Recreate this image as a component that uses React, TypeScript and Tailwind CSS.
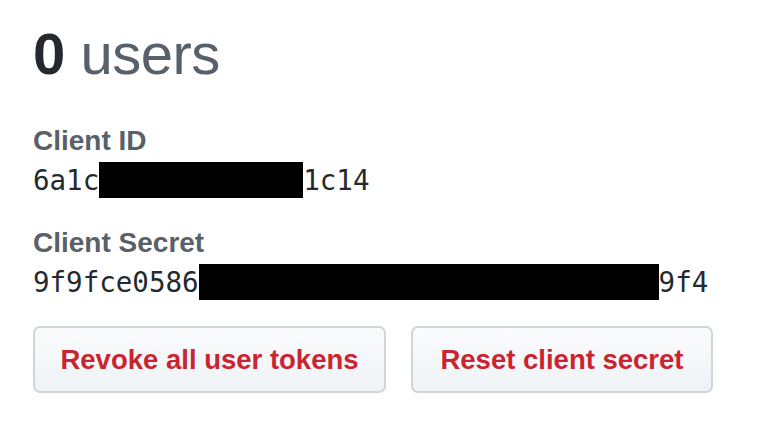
import React from 'react';

const sans = "font-['Liberation_Sans',Arial,sans-serif]";
const mono = "font-['DejaVu_Sans_Mono','Liberation_Mono',monospace]";

const Redacted: React.FC<{ width: string }> = ({ width }) => (
  <span className={`inline-block ${width} h-[36px] bg-black align-[-8px]`} />
);

export default function App() {
  return (
    <div className={`w-[758px] h-[422px] bg-white pl-[33px] pt-[18px] ${sans}`}>
      <h2 className="text-[58px] leading-[72px] tracking-[-0.5px]">
        <span className="font-bold text-[#24292e]">0</span>{' '}
        <span className="text-[#586069]">users</span>
      </h2>

      <div className="mt-[35px] flex flex-col">
        <div className="text-[28px] leading-[32px] font-bold text-[#586069]">Client ID</div>
        <div className={`mt-[5px] text-[27.5px] leading-[36px] text-[#24292e] ${mono}`}>
          6a1c<Redacted width="w-[204px]" />1c14
        </div>
      </div>

      <div className="mt-[29px] flex flex-col">
        <div className="text-[28px] leading-[32px] font-bold text-[#586069]">Client Secret</div>
        <div className={`mt-[5px] text-[27.5px] leading-[36px] text-[#24292e] ${mono}`}>
          9f9fce0586<Redacted width="w-[460px]" />9f4
        </div>
      </div>

      <div className="mt-[26px] flex gap-[25px]">
        <button className="w-[353px] h-[67px] rounded-[7px] border-2 border-[#d1d5da] bg-gradient-to-b from-[#fafbfc] to-[#eff3f6] text-[#cb2431] text-[27.5px] font-bold">
          Revoke all user tokens
        </button>
        <button className="w-[302px] h-[67px] rounded-[7px] border-2 border-[#d1d5da] bg-gradient-to-b from-[#fafbfc] to-[#eff3f6] text-[#cb2431] text-[27.5px] font-bold">
          Reset client secret
        </button>
      </div>
    </div>
  );
}
